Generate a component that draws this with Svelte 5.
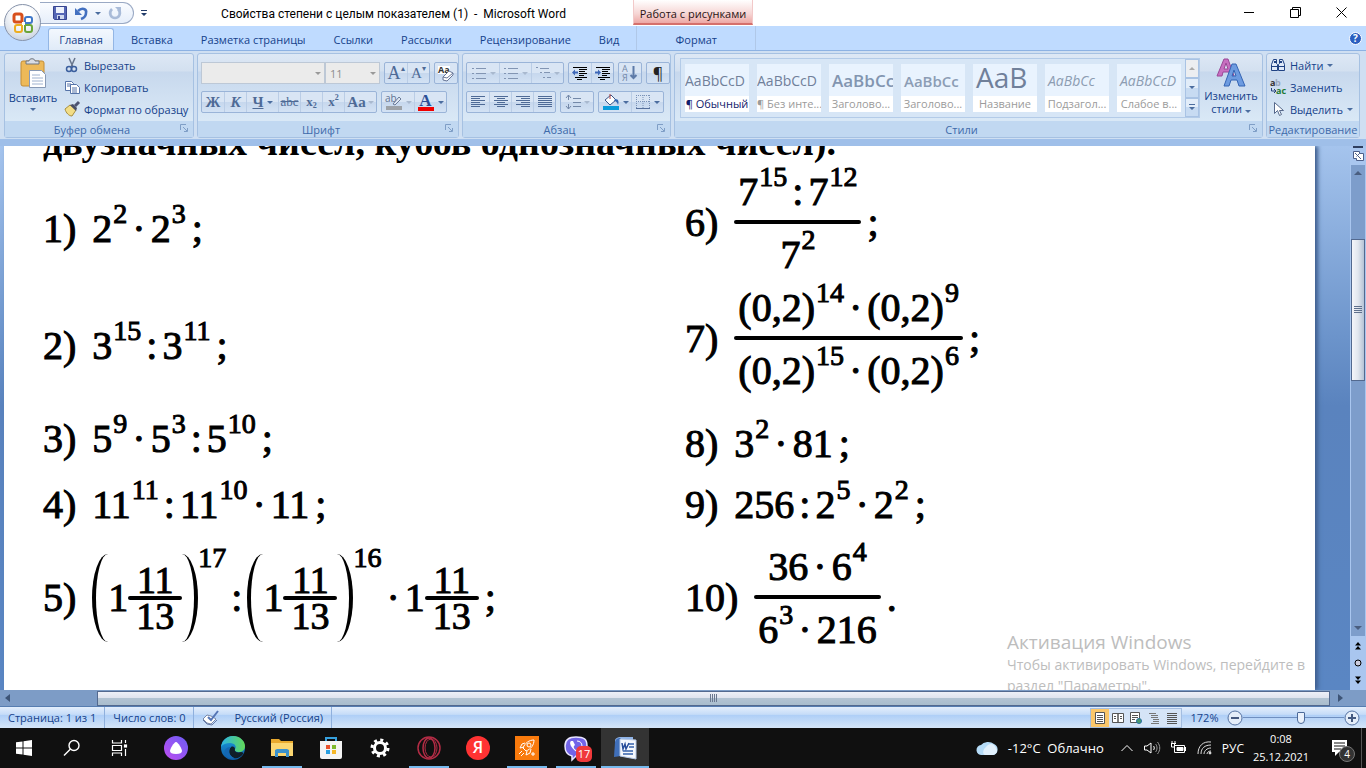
<script>
	let fontSize = '11';
	let zoom = 172;

	const tabs = ['Вставка', 'Разметка страницы', 'Ссылки', 'Рассылки', 'Рецензирование', 'Вид'];

	const styles = [
		{ name: '¶ Обычный', sample: 'AaBbCcD', kind: 'normal active' },
		{ name: '¶ Без инте...', sample: 'AaBbCcD', kind: 'normal' },
		{ name: 'Заголово...', sample: 'AaBbCс', kind: 'heading1' },
		{ name: 'Заголово...', sample: 'AaBbCc', kind: 'heading2' },
		{ name: 'Название', sample: 'АаВ', kind: 'title' },
		{ name: 'Подзагол...', sample: 'AaBbCc', kind: 'subtitle' },
		{ name: 'Слабое в...', sample: 'AaBbCcD', kind: 'subtle' }
	];

	const mixed = [{ v: '1' }, { small: true, top: [{ v: '11' }], bottom: [{ v: '13' }] }];

	const left = [
		{ n: '1)', parts: [{ v: '2', s: '2' }, { op: '·' }, { v: '2', s: '3' }], end: ';' },
		{ n: '2)', parts: [{ v: '3', s: '15' }, { op: ':' }, { v: '3', s: '11' }], end: ';' },
		{
			n: '3)',
			parts: [{ v: '5', s: '9' }, { op: '·' }, { v: '5', s: '3' }, { op: ':' }, { v: '5', s: '10' }],
			end: ';'
		},
		{
			n: '4)',
			parts: [{ v: '11', s: '11' }, { op: ':' }, { v: '11', s: '10' }, { op: '·' }, { v: '11' }],
			end: ';'
		},
		{
			n: '5)',
			parts: [{ paren: mixed, s: '17' }, { op: ':' }, { paren: mixed, s: '16' }, { op: '·' }, ...mixed],
			end: ';'
		}
	];

	const right = [
		{
			n: '6)',
			parts: [
				{ top: [{ v: '7', s: '15' }, { op: ':' }, { v: '7', s: '12' }], bottom: [{ v: '7', s: '2' }] }
			],
			end: ';'
		},
		{
			n: '7)',
			parts: [
				{
					top: [{ v: '(0,2)', s: '14' }, { op: '·' }, { v: '(0,2)', s: '9' }],
					bottom: [{ v: '(0,2)', s: '15' }, { op: '·' }, { v: '(0,2)', s: '6' }]
				}
			],
			end: ';'
		},
		{ n: '8)', parts: [{ v: '3', s: '2' }, { op: '·' }, { v: '81' }], end: ';' },
		{
			n: '9)',
			parts: [{ v: '256' }, { op: ':' }, { v: '2', s: '5' }, { op: '·' }, { v: '2', s: '2' }],
			end: ';'
		},
		{
			n: '10)',
			parts: [
				{
					top: [{ v: '36' }, { op: '·' }, { v: '6', s: '4' }],
					bottom: [{ v: '6', s: '3' }, { op: '·' }, { v: '216' }]
				}
			],
			end: '.'
		}
	];
</script>

{#snippet terms(parts)}
	{#each parts as p}
		{#if p.op}
			<span class="op">{p.op}</span>
		{:else if p.top}
			<span class="frac" class:small={p.small}>
				<span class="line">{@render terms(p.top)}</span>
				<span class="bar"></span>
				<span class="line den">{@render terms(p.bottom)}</span>
			</span>
		{:else if p.paren}
			<span class="paren open"></span>
			{@render terms(p.paren)}
			<span class="paren close"></span>
			<span class="power">{p.s}</span>
		{:else}
			<span class="term">{p.v}{#if p.s}<sup>{p.s}</sup>{/if}</span>
		{/if}
	{/each}
{/snippet}

{#snippet problems(list, side)}
	<ul class="problems {side}">
		{#each list as item}
			<li>
				<span class="num">{item.n}</span>
				{@render terms(item.parts)}
				<span class="end">{item.end}</span>
			</li>
		{/each}
	</ul>
{/snippet}

{#snippet lines(widths)}
	<svg width="16" height="14" viewBox="0 0 16 14" shape-rendering="crispEdges">
		{#each widths as w, i}
			<rect x={w[0]} y={1 + i * 2} width={w[1]} height="1" fill="currentColor" />
		{/each}
	</svg>
{/snippet}

{#snippet launcher()}
	<button class="launcher" aria-label="Параметры">
		<svg width="8" height="8" viewBox="0 0 8 8" fill="none" stroke="#7f9ec6">
			<path d="M.5 6V.5H6M3 3l4 4M7.5 4v3.5H4" />
		</svg>
	</button>
{/snippet}

<div class="window">
	<header class="titlebar">
		<div class="quick">
			<button aria-label="Сохранить">
				<svg width="14" height="14" viewBox="0 0 14 14">
					<path d="M.5.5h13v13h-12l-1-1z" fill="#5566b5" stroke="#38458f" />
					<rect x="3" y="1" width="8" height="6" fill="#eef2fb" />
					<rect x="4" y="9" width="7" height="4" fill="#cfd8ee" />
					<rect x="5" y="10" width="2" height="3" fill="#38458f" />
				</svg>
			</button>
			<button aria-label="Отменить">
				<svg width="14" height="14" viewBox="0 0 14 14" fill="none">
					<path d="M4 5c4-4 9-2 8 2 0 3-2 5-5 6" stroke="#4370c0" stroke-width="2.6" />
					<path d="M1 2v7h7z" fill="#4370c0" />
				</svg>
			</button>
			<span class="arrow"></span>
			<button aria-label="Повторить">
				<svg width="14" height="14" viewBox="0 0 14 14" fill="none">
					<path d="M4 3c-4 4-1 9 3 9s7-5 3-9" stroke="#a9bbd8" stroke-width="2.6" />
					<path d="M7 1h6v6z" fill="#a9bbd8" />
				</svg>
			</button>
		</div>
		<button class="customize" aria-label="Настройка панели">
			<svg width="6" height="7" viewBox="0 0 6 7" fill="#223c6a"><path d="M0 0h6v1H0zM0 3h6L3 6z" /></svg>
		</button>
		<h1>Свойства степени с целым показателем (1) &nbsp;- &nbsp;Microsoft Word</h1>
		<div class="context">Работа с рисунками</div>
		<div class="controls">
			<button aria-label="Свернуть"><svg width="11" height="11"><path d="M0 5.5h10" stroke="#000" /></svg></button>
			<button aria-label="Свернуть в окно">
				<svg width="11" height="11" fill="none" stroke="#000"><path d="M.5 2.5h8v8h-8zM2.5 2.5v-2h8v8h-2" /></svg>
			</button>
			<button aria-label="Закрыть"><svg width="11" height="11"><path d="M.5.5l10 10M10.5.5l-10 10" stroke="#000" /></svg></button>
		</div>
	</header>

	<button class="office" aria-label="Кнопка Office">
		<svg width="24" height="24" viewBox="0 0 24 24" fill="none">
			<path d="M11 11H5a2 2 0 0 1-2-2V5a2 2 0 0 1 2-2h4a2 2 0 0 1 2 2v6" stroke="#d8501c" stroke-width="3" />
			<path d="M14 11V8a2 2 0 0 1 2-2h3a2 2 0 0 1 2 2v2a2 2 0 0 1-2 2h-5" stroke="#3f78c9" stroke-width="2" />
			<path d="M11 14v5a2 2 0 0 1-2 2H6a2 2 0 0 1-2-2v-3a2 2 0 0 1 2-2h5" stroke="#edae20" stroke-width="2" />
			<path d="M14 14h5a2 2 0 0 1 2 2v3a2 2 0 0 1-2 2h-3a2 2 0 0 1-2-2v-5" stroke="#6ba53a" stroke-width="2" />
		</svg>
	</button>

	<nav class="tabs">
		<button class="tab current">Главная</button>
		{#each tabs as tab}
			<button class="tab">{tab}</button>
		{/each}
		<button class="tab format">Формат</button>
		<button class="help" aria-label="Справка">?</button>
	</nav>

	<section class="ribbon">
		<div class="group clipboard">
			<div class="body">
				<button class="big">
					<svg width="28" height="32" viewBox="0 0 28 32">
						<rect x="2" y="3" width="23" height="25" rx="2" fill="#edb958" stroke="#c48d35" />
						<path d="M7 6V3h3c0-3 6-3 6 0h4v3z" fill="#d9dde4" stroke="#70767f" />
						<path d="M10.500 12.500h12l4 4v13h-16z" fill="#fff" stroke="#8799b5" />
						<path d="M13 17h8M13 20h11M13 23h11M13 26h11" stroke="#9fb2cf" />
					</svg>
					<span>Вставить</span>
					<span class="arrow"></span>
				</button>
				<div class="stack">
					<button>
						<svg width="16" height="16" viewBox="0 0 16 16" fill="none" stroke="#3b5f9e">
							<path d="M5 1l4 9M11 1L7 10" stroke="#67758c" stroke-width="1.500" />
							<circle cx="5" cy="12" r="2.500" stroke-width="1.500" />
							<circle cx="10" cy="12" r="2.500" stroke-width="1.500" />
						</svg>
						Вырезать
					</button>
					<button>
						<svg width="16" height="16" viewBox="0 0 16 16" fill="#fff" stroke="#5573a8">
							<path d="M1.500 2.500h6l2 2v7h-8z" />
							<path d="M3 5h4M3 7h4" />
							<path d="M6.500 5.500h6l3 3v6h-9z" />
							<path d="M8 9h5M8 11h5M8 13h5" />
						</svg>
						Копировать
					</button>
					<button>
						<svg width="16" height="16" viewBox="0 0 16 16">
							<path d="M1 8l5-4 6 5-4 6c-3 0-6-3-7-7z" fill="#f2dd86" stroke="#a98f3c" />
							<path d="M6 4l3-1 4 4-1 3z" fill="#4a4f66" />
							<path d="M11 5l4-4" stroke="#4d5472" stroke-width="3" />
						</svg>
						Формат по образцу
					</button>
				</div>
			</div>
			<footer>Буфер обмена{@render launcher()}</footer>
		</div>

		<div class="group font">
			<div class="body rows">
				<div class="row">
					<div class="combos">
						<label class="combo name">
							<select aria-label="Шрифт" disabled><option></option></select>
							<span class="arrow"></span>
						</label>
						<label class="combo size">
							<select aria-label="Размер шрифта" bind:value={fontSize} disabled><option>11</option></select>
							<span class="arrow"></span>
						</label>
					</div>
					<div class="set">
						<button class="serif big-a" aria-label="Увеличить размер">A<sup>▴</sup></button>
						<button class="serif" aria-label="Уменьшить размер">A<sup>▾</sup></button>
					</div>
					<div class="set">
						<button aria-label="Очистить формат">
							<svg width="18" height="17" viewBox="0 0 18 17">
								<rect x="1" y="1" width="12" height="8" fill="#fff" />
								<text x="1" y="8" font-size="9" font-weight="bold" fill="#333">Aa</text>
								<path d="M6 12l6-6 4 2v2l-6 6-4-1z" fill="#fff" stroke="#667597" />
								<path d="M6 12l4 1 6-5" fill="none" stroke="#667597" />
							</svg>
						</button>
					</div>
				</div>
				<div class="row">
					<div class="set">
						<button class="serif bold">Ж</button>
						<button class="serif bold italic">К</button>
						<button class="serif bold wide"><u>Ч</u><span class="arrow"></span></button>
						<button class="serif small"><s>abc</s></button>
						<button class="serif bold small">x<sub>2</sub></button>
						<button class="serif bold small">x<sup>2</sup></button>
						<button class="serif bold case">Aa<span class="arrow dim"></span></button>
					</div>
					<div class="set">
						<button class="wide" aria-label="Цвет выделения">
							<svg width="18" height="18" viewBox="0 0 18 18">
								<text x="0" y="9" font-size="10" fill="#5f7292">ab</text>
								<path d="M8 11l6-7 2 2-6 6z" fill="#dfe7f2" stroke="#6b7c99" />
								<rect x="1" y="13" width="16" height="4" fill="#9da2a8" />
							</svg>
							<span class="arrow dim"></span>
						</button>
						<button class="color" aria-label="Цвет текста">
							<span class="swatch">A</span>
							<span class="arrow"></span>
						</button>
					</div>
				</div>
			</div>
			<footer>Шрифт{@render launcher()}</footer>
		</div>

		<div class="group paragraph">
			<div class="body rows">
				<div class="row">
					<div class="set dim">
						{#each ['bullets', 'numbers', 'levels'] as kind}
							<button class="list" aria-label={kind}>
								<svg width="16" height="14" viewBox="0 0 16 14" stroke="currentColor" shape-rendering="crispEdges">
									{#if kind === 'levels'}
										<path d="M1 1.500h2M5 2.500h9M5 6.500h2M9 6.500h6M8 11.500h2M12 11.500h4" />
									{:else}
										<path d="M1 2.500h2M1 7.500h2M1 12.500h2M5 2.500h10M5 7.500h10M5 12.500h10" />
									{/if}
								</svg>
								<span class="arrow dim"></span>
							</button>
						{/each}
					</div>
					<div class="set">
						<button aria-label="Уменьшить отступ">
							<svg width="16" height="14" viewBox="0 0 16 14">
								<path d="M1 1.500h14M7 3.500h8M7 5.500h6M7 7.500h8M7 9.500h5M3 11.500h12M5 13.500h5" stroke="#000" />
								<path d="M0 6.500l3-3v2h3v2H3v2z" fill="#3d67b8" />
							</svg>
						</button>
						<button aria-label="Увеличить отступ">
							<svg width="16" height="14" viewBox="0 0 16 14">
								<path d="M1 1.500h14M7 3.500h8M7 5.500h6M7 7.500h8M7 9.500h5M3 11.500h12M5 13.500h5" stroke="#000" />
								<path d="M6 6.500l-3-3v2H0v2h3v2z" fill="#3d67b8" />
							</svg>
						</button>
					</div>
					<div class="set">
						<button class="dim" aria-label="Сортировка">
							<svg width="16" height="18" viewBox="0 0 16 18">
								<text x="0" y="8" font-size="9" fill="#7388a8">А</text>
								<text x="0" y="17" font-size="9" fill="#7388a8">Я</text>
								<path d="M11.500 2v12M8.500 11l3 3 3-3" fill="none" stroke="#5d7aa8" stroke-width="2" />
							</svg>
						</button>
					</div>
					<div class="set"><button class="pilcrow">¶</button></div>
				</div>
				<div class="row">
					<div class="set">
						<button aria-label="По левому краю">{@render lines([[1, 14], [1, 9], [1, 14], [1, 9], [1, 14], [1, 9]])}</button>
						<button aria-label="По центру">{@render lines([[1, 14], [4, 8], [1, 14], [4, 8], [1, 14], [4, 8]])}</button>
						<button aria-label="По правому краю">{@render lines([[1, 14], [6, 9], [1, 14], [6, 9], [1, 14], [6, 9]])}</button>
						<button aria-label="По ширине">{@render lines([[1, 14], [1, 14], [1, 14], [1, 14], [1, 14], [1, 14]])}</button>
					</div>
					<div class="set">
						<button class="list dim" aria-label="Интервал">
							<svg width="16" height="16" viewBox="0 0 16 16" fill="none" stroke="#7388a8">
								<path d="M3.500 1v5M1 4l2.500-3L6 4M3.500 10v5M1 12l2.500 3L6 12M8 4.500h8M8 8.500h8M8 12.500h8" />
							</svg>
							<span class="arrow dim"></span>
						</button>
					</div>
					<div class="set">
						<button class="wide" aria-label="Заливка">
							<svg width="18" height="18" viewBox="0 0 18 18">
								<path d="M3 7l6-5 5 5-6 5z" fill="#fff" stroke="#3a5587" />
								<path d="M8 1v5" stroke="#b04040" />
								<path d="M13 6c4 0 4 3 3 6-1-3-2-4-4-4z" fill="#2f66b3" />
								<rect x="1" y="13" width="16" height="4" fill="#0a9cdc" />
							</svg>
							<span class="arrow"></span>
						</button>
						<button class="wide" aria-label="Границы">
							<svg width="16" height="16" viewBox="0 0 16 16" fill="none" stroke="#7b93b8" stroke-dasharray="1 1">
								<path d="M1.500 1v13M14.500 1v13M8 1v13M1 1.500h14M1 7.500h14" />
								<path d="M1 14.500h14" stroke="#56709c" stroke-dasharray="none" />
							</svg>
							<span class="arrow"></span>
						</button>
					</div>
				</div>
			</div>
			<footer>Абзац{@render launcher()}</footer>
		</div>

		<div class="group styles">
			<div class="body">
				<div class="gallery">
					<div class="cards">
						{#each styles as style}
							<button class="card {style.kind}">
								<span class="sample">{style.sample}</span>
								<span class="caption">{style.name}</span>
							</button>
						{/each}
					</div>
					<div class="scroller">
						<button class="off" aria-label="Вверх"><span class="arrow up"></span></button>
						<button aria-label="Вниз"><span class="arrow"></span></button>
						<button aria-label="Ещё">
							<svg width="6" height="7" viewBox="0 0 6 7" fill="#4b6d9f"><path d="M0 0h6v1H0zM0 3h6L3 6z" /></svg>
						</button>
					</div>
				</div>
				<button class="big change">
					<svg width="30" height="30" viewBox="0 0 30 30">
						<path d="M1 18L8 1h4l6 17h-4l-1-4H7l-1 4zM8 11h4l-2-6z" fill="#c76fc0" stroke="#9a4796" />
						<path d="M8 28L16 6h4l9 22h-6l-2-6h-6l-2 6zM16 18h4l-2-6z" fill="#6d9be0" stroke="#3565b4" />
					</svg>
					<span>Изменить стили <span class="arrow"></span></span>
				</button>
			</div>
			<footer>Стили{@render launcher()}</footer>
		</div>

		<div class="group editing">
			<div class="body">
				<div class="stack">
					<button>
						<svg width="16" height="14" viewBox="0 0 16 14" stroke="#1f4183" fill="#dfe9f8">
							<path d="M3.500 1.500h3v4l1 1v6h-6v-6zM9.500 1.500h3l2 5v6h-6v-6l1-1zM1 8.500h14" />
							<path d="M4 4h2M10 4h2" stroke-width="2" />
						</svg>
						Найти <span class="arrow"></span>
					</button>
					<button>
						<svg width="16" height="16" viewBox="0 0 16 16" font-size="9" font-weight="bold">
							<text x="0" y="7" fill="#333">a</text>
							<text x="5" y="7" fill="#9aa8bf">b</text>
							<text x="6" y="15" fill="#1e7a34">ac</text>
							<path d="M1.500 9v3h4M4 10l2 2-2 2" fill="none" stroke="#27427c" />
						</svg>
						Заменить
					</button>
					<button>
						<svg width="16" height="16" viewBox="0 0 16 16">
							<path d="M4.500 1.500v11l3-3 2 5 2-1-2-4h4z" fill="#fff" stroke="#56698c" />
						</svg>
						Выделить <span class="arrow"></span>
					</button>
				</div>
			</div>
			<footer>Редактирование</footer>
		</div>
	</section>

	<main>
		<article class="paper">
			<div class="cut"><p>двузначных чисел, кубов однозначных чисел).</p></div>
			<div class="columns">
				{@render problems(left, 'first')}
				{@render problems(right, 'second')}
			</div>
		</article>
		<aside class="watermark">
			<h2>Активация Windows</h2>
			<p>Чтобы активировать Windows, перейдите в раздел "Параметры".</p>
		</aside>
		<div class="vscroll">
			<span class="split"></span>
			<button aria-label="Линейка">
				<svg width="13" height="12" viewBox="0 0 13 12" fill="#fff" stroke="#4c5f8a">
					<path d="M1.500 1.500h6v2h4v7h-7v-2h-3zM3 3l6 6M7.500 3.500l-3 3" />
				</svg>
			</button>
			<div class="track">
				<span class="arrow up"></span>
				<div class="thumb"><i></i></div>
				<span class="arrow down"></span>
			</div>
			<div class="browse">
				<svg width="8" height="8" viewBox="0 0 8 8"><path d="M1 3.500L4 0l3 3.500zM1 7.500L4 4l3 3.500z" /></svg>
				<svg width="8" height="8" viewBox="0 0 8 8"><circle cx="4" cy="4" r="3" fill="#ccd" stroke="#000" /></svg>
				<svg width="8" height="8" viewBox="0 0 8 8"><path d="M1 .5h6L4 4zM1 4.500h6L4 8z" /></svg>
			</div>
		</div>
	</main>

	<div class="hscroll">
		<span class="arrow prev"></span>
		<div class="thumb"><i></i></div>
		<span class="arrow next"></span>
	</div>

	<div class="status">
		<button>Страница: 1 из 1</button>
		<button>Число слов: 0</button>
		<button class="lang">
			<svg width="18" height="16" viewBox="0 0 18 16">
				<path d="M1 9l4-4 4 1 5 3-5 5-4-1z" fill="#fff" stroke="#7a89a8" />
				<path d="M1 10l4 4 5 1 5-5" fill="none" stroke="#6478a5" />
				<path d="M6 7l3 3 7-9" fill="none" stroke="#5575b5" stroke-width="2" />
			</svg>
			Русский (Россия)
		</button>
		<div class="views">
			<button class="picked" aria-label="Разметка">
				<svg width="12" height="12" fill="#fff" stroke="#555"><path d="M1.500.5h9v11h-9zM3 3.500h6M3 5.500h6M3 7.500h6M3 9.500h6" /></svg>
			</button>
			<button aria-label="Чтение">
				<svg width="12" height="12" fill="#fff" stroke="#555"><path d="M.5 1.500H6v9H.5zM6 1.500h5.500v9H6zM2 4.500h2M2 6.500h2M8 4.500h2M8 6.500h2" /></svg>
			</button>
			<button aria-label="Веб-документ">
				<svg width="12" height="12" fill="#fff" stroke="#555"><path d="M.5.5h9v10h-9zM2 3.500h6M2 5.500h6M2 7.500h3" /><circle cx="9" cy="9" r="2.500" fill="#4a9a6a" stroke="#2a6fa5" /></svg>
			</button>
			<button aria-label="Структура">
				<svg width="12" height="12" stroke="#777"><path d="M1 1.500h7M3 3.500h7M3 5.500h7M5 7.500h6M5 9.500h6M3 11.500h8" /></svg>
			</button>
			<button aria-label="Черновик">
				<svg width="12" height="12" stroke="#555"><path d="M1 1.500h10M1 3.500h10M1 5.500h10M1 7.500h10M1 9.500h10M1 11.500h10" /></svg>
			</button>
		</div>
		<span class="percent">{zoom}%</span>
		<button class="round" aria-label="Уменьшить">
			<svg width="16" height="16" viewBox="0 0 16 16"><circle cx="8" cy="8" r="7" fill="#e4edf9" stroke="#5673a3" /><path d="M4 8h8" stroke="#45597f" stroke-width="2" /></svg>
		</button>
		<input type="range" aria-label="Масштаб" min="10" max="290" bind:value={zoom} />
		<button class="round" aria-label="Увеличить">
			<svg width="16" height="16" viewBox="0 0 16 16"><circle cx="8" cy="8" r="7" fill="#e4edf9" stroke="#5673a3" /><path d="M4 8h8M8 4v8" stroke="#45597f" stroke-width="2" /></svg>
		</button>
	</div>

	<footer class="taskbar">
		<button aria-label="Пуск">
			<svg width="16" height="16" viewBox="0 0 16 16" fill="#fff"><path d="M0 2.300L6.500 1.400v6.100H0zM7.500 1.300L16 0v7.500H7.500zM0 8.500h6.500v6.100L0 13.700zM7.500 8.500H16V16l-8.500-1.300z" /></svg>
		</button>
		<button aria-label="Поиск">
			<svg width="18" height="18" viewBox="0 0 18 18" fill="none" stroke="#fff" stroke-width="1.400"><circle cx="11" cy="6.500" r="5" /><path d="M7.500 10L1 16.500" /></svg>
		</button>
		<button aria-label="Представление задач">
			<svg width="18" height="16" viewBox="0 0 18 16" fill="none" stroke="#fff" stroke-width="1.200"><path d="M1.500 0v3h9V0M1.500 16v-3h9v3M1.500 5.500h9v5h-9zM14.500 0v3M14.500 9v7" /><rect x="13.500" y="5" width="2" height="2" fill="#fff" /></svg>
		</button>
		<button class="alice" aria-label="Алиса">
			<svg width="24" height="24" viewBox="0 0 24 24">
				<defs><linearGradient id="al" x1="0" y1="1" x2="1" y2="0"><stop offset="0" stop-color="#c04df0" /><stop offset="1" stop-color="#6a5df5" /></linearGradient></defs>
				<circle cx="12" cy="12" r="12" fill="url(#al)" />
				<path d="M12 6c2 0 6 7 6 9s-2 3-6 3-6-1-6-3 4-9 6-9z" fill="#fff" />
			</svg>
		</button>
		<button aria-label="Edge">
			<svg width="24" height="24" viewBox="0 0 24 24">
				<defs>
					<linearGradient id="e1" x1="0" y1="0" x2="1" y2="0"><stop offset="0" stop-color="#2bb3e6" /><stop offset="1" stop-color="#62d957" /></linearGradient>
					<linearGradient id="e2" x1="0" y1="0" x2="0" y2="1"><stop offset="0" stop-color="#1d9fe0" /><stop offset="1" stop-color="#0c59a4" /></linearGradient>
				</defs>
				<circle cx="12" cy="12" r="12" fill="url(#e2)" />
				<path d="M0 11C1 4 6 0 12 0c7 0 12 5 12 10 0 4-3 6-6 6-3 0-5-1-4-3 2-2 0-6-5-6-4 0-7 1-9 4z" fill="url(#e1)" />
				<path d="M14 13c-1 3 3 4 6 3 2 0 3 1 2 2-2 3-6 5-9 4-5-2-6-8-3-11 2-1 4 0 4 2z" fill="#111" opacity=".85" />
				<path d="M10 11c-4 3-2 9 3 11-6 2-11-4-9-8 1-2 3-3 6-3z" fill="#1467b3" />
			</svg>
		</button>
		<button class="running" aria-label="Проводник">
			<svg width="22" height="18" viewBox="0 0 22 18"><path d="M0 0h8l2 2h12v15H0z" fill="#e8a92e" /><path d="M0 4h22v13H0z" fill="#fbd671" /><path d="M4 18v-7l2-1h10l2 1v7h-3v-4H7v4z" fill="#3c92cc" /></svg>
		</button>
		<button aria-label="Магазин">
			<svg width="24" height="24" viewBox="0 0 24 24"><path d="M7 5V2h10v3" fill="none" stroke="#36a0dd" stroke-width="2" /><path d="M1 5h22v16a2 2 0 0 1-2 2H3a2 2 0 0 1-2-2z" fill="#f4f4f4" /><path d="M7 9h4v4H7z" fill="#e9522c" /><path d="M13 9h4v4h-4z" fill="#7db92c" /><path d="M7 14h4v4H7z" fill="#2a9fe0" /><path d="M13 14h4v4h-4z" fill="#f5b727" /></svg>
		</button>
		<button aria-label="Параметры">
			<svg width="20" height="20" viewBox="0 0 20 20" fill="none" stroke="#fff"><circle cx="10" cy="10" r="5.500" stroke-width="3" /><circle cx="10" cy="10" r="8" stroke-width="3" stroke-dasharray="3 3.280" /></svg>
		</button>
		<button class="running" aria-label="Opera">
			<svg width="24" height="24" viewBox="0 0 24 24" fill="none" stroke="#b32c45"><circle cx="12" cy="12" r="11" stroke-width="1.500" /><ellipse cx="12" cy="12" rx="6" ry="10" stroke-width="1.500" /><ellipse cx="14" cy="12" rx="6" ry="9" /></svg>
		</button>
		<button aria-label="Яндекс"><span class="yandex">Я</span></button>
		<button class="running" aria-label="Ракета">
			<svg width="24" height="24" viewBox="0 0 24 24"><rect width="24" height="24" fill="#f97a0c" /><g fill="none" stroke="#fff"><path d="M8 12c2-5 6-8 11-8 0 5-3 9-8 11zM9 11l-4 1 2-4 3-1M12 15l-1 4 4-2 1-4M7 15l-3 3M9 17l-3 3" /><circle cx="14" cy="9" r="2" /><path d="M18 16v4M16 18h4" /></g></svg>
		</button>
		<button class="running" aria-label="Viber">
			<svg width="24" height="24" viewBox="0 0 24 24"><path d="M12 1c8 0 11 2 11 9s-3 10-11 10l-4 4v-4c-5-1-7-4-7-10s3-9 11-9z" fill="#7264e8" stroke="#e9e6ff" stroke-width="1.500" /><path d="M7 5c-3 2 2 10 8 12l2-2-3-2-2 1c-1 0-3-3-2-4l1-1-2-4z" fill="#fff" /><path d="M13 5c3 0 5 2 5 5" fill="none" stroke="#fff" /></svg>
			<span class="badge">17</span>
		</button>
		<button class="running now" aria-label="Word">
			<svg width="24" height="24" viewBox="0 0 24 24"><path d="M2 5c0-3 3-4 6-4h12v18H2z" fill="#8fb3e6" /><path d="M2 6c1-4 4-4 6-4v18l-7 1z" fill="#406fb9" /><path d="M7 3l16 1v19L7 20z" fill="#f5f8fd" stroke="#b5c8e6" /><path d="M9 7l1 6 2-5 1 5 3-6" fill="none" stroke="#264c9a" stroke-width="1.500" /><path d="M16 8h5M16 11h5M10 15h10M10 18h10" stroke="#3560ab" stroke-width="1.500" /></svg>
		</button>
		<div class="tray">
			<button class="weather">
				<svg width="24" height="18" viewBox="0 0 24 18"><path d="M6 16a5 5 0 0 1-1-10 8 6 0 0 1 13-1 6 6 0 0 1 0 11z" fill="#b5dcf8" /><path d="M10 8c3-4 8-4 10 1 3 4-1 7-4 7H9c-3-1-2-6 1-8z" fill="#e2f1fd" /></svg>
				-12°C&nbsp; Облачно
			</button>
			<button aria-label="Значки"><svg width="14" height="8" fill="none" stroke="#fff"><path d="M1.500 7L7 1.500 12.500 7" /></svg></button>
			<button aria-label="Громкость">
				<svg width="18" height="14" fill="none" stroke="#fff"><path d="M1.500 5H4l4-3v10L4 9H1.500zM10.500 5c1 1 1 3 0 4" /><path d="M12.500 3c2 2 2 6 0 8M14.500 1c3 4 3 8 0 12" stroke="#999" /></svg>
			</button>
			<button aria-label="Батарея">
				<svg width="18" height="14" fill="none" stroke="#fff"><path d="M4.500 4.500h10v7h-10zM15.500 6v4M1 2.500h5M1.500 3v3h3V3M2 0v3M5 0v3" /><path d="M7 6.500h6v3H7z" fill="#fff" /></svg>
			</button>
			<button aria-label="Сеть">
				<svg width="16" height="16" fill="none" stroke="#ddd"><path d="M1 14C1 6 6 1 14 2M4 14c0-6 4-9 10-9M7 14c0-3 3-6 7-6M10 14c0-2 2-3 4-3" /><circle cx="13" cy="13" r="1" fill="#fff" /></svg>
			</button>
			<button>РУС</button>
			<button class="clock"><span>0:08</span><span>25.12.2021</span></button>
			<button class="notes" aria-label="Уведомления">
				<svg width="18" height="18" fill="#fff"><path d="M1 1h15v12H8l-4 4v-4H1z" /><path d="M3 4h11M3 7h11M3 10h7" stroke="#111" /></svg>
				<span class="count">4</span>
			</button>
		</div>
	</footer>
</div>

<style>
	:global(body) {
		margin: 0;
	}
	.window {
		position: relative;
		display: flex;
		flex-direction: column;
		height: 100vh;
		overflow: hidden;
		background: #bfdbff;
		color: #15428b;
		font-family: 'Open Sans', 'Noto Sans', sans-serif;
		font-size: 11px;
	}
	button {
		display: flex;
		align-items: center;
		justify-content: center;
		margin: 0;
		padding: 0;
		border: 0;
		background: none;
		color: inherit;
		font: inherit;
		white-space: nowrap;
	}
	svg {
		flex: none;
		overflow: visible;
	}
	.arrow {
		display: inline-block;
		flex: none;
		border: 3px solid transparent;
		border-top-color: #4b6d9f;
		border-bottom: 0;
	}
	.arrow.up {
		border: 4px solid transparent;
		border-bottom-color: #4a5e80;
		border-top: 0;
	}
	.arrow.down {
		border-width: 4px;
		border-bottom: 0;
		border-top-color: #4a5e80;
	}
	.arrow.dim {
		border-top-color: #a9b9cf;
	}

	/* title */
	.titlebar {
		display: flex;
		height: 26px;
		background: #fff;
	}
	.quick {
		display: flex;
		align-items: center;
		gap: 7px;
		box-sizing: border-box;
		width: 94px;
		height: 22px;
		margin: 2px 0 0 40px;
		padding-left: 13px;
		border: 1px solid #9aa9c4;
		border-left: 0;
		border-radius: 0 12px 12px 0;
		background: linear-gradient(#fafcff, #e6eefa);
	}
	.customize {
		width: 20px;
	}
	h1 {
		flex: 1;
		margin: 0;
		color: #000;
		font-family: Roboto, sans-serif;
		font-size: 12px;
		font-weight: 400;
		line-height: 28px;
		text-align: center;
	}
	.context {
		width: 118px;
		height: 23px;
		border: 1px solid #f2c9c9;
		border-top: 0;
		border-bottom: 2px solid #d5706c;
		background: linear-gradient(#fff, #f6d5d4 60%, #eda8a5);
		color: #2a1414;
		line-height: 28px;
		text-align: center;
	}
	.controls {
		display: flex;
		justify-content: flex-end;
		box-sizing: border-box;
		width: 613px;
		padding-right: 2px;
	}
	.controls button {
		width: 46px;
		height: 24px;
	}
	.office {
		position: absolute;
		top: 4px;
		left: 4px;
		z-index: 2;
		width: 37px;
		height: 37px;
		border: 1px solid #8793aa;
		border-radius: 50%;
		background: radial-gradient(circle at 50% 30%, #fff 30%, #dde3ec 65%, #b9c3d3);
	}

	/* tabs */
	.tabs {
		display: flex;
		height: 24px;
		padding-left: 48px;
		padding-right: 4px;
		background: #bfdbff;
	}
	.tab {
		padding: 2px 14px 0;
	}
	.tab.current {
		width: 66px;
		margin-top: 2px;
		margin-right: 3px;
		padding: 0;
		border: 1px solid #93b6e5;
		border-bottom: 0;
		border-radius: 3px 3px 0 0;
		background: linear-gradient(#f3f8fe, #e0ebf8);
	}
	.tab.format {
		width: 120px;
		margin-left: 3px;
		border-left: 1px solid #b0c8e8;
		border-right: 1px solid #b0c8e8;
	}
	.help {
		align-self: center;
		width: 13px;
		height: 13px;
		margin-left: auto;
		border: 1px solid #fff;
		border-radius: 50%;
		background: #2c5fc0;
		color: #fff;
		font-size: 10px;
		font-weight: 700;
	}

	/* ribbon */
	.ribbon {
		display: flex;
		gap: 3px;
		padding: 2px 6px 1px 4px;
		border-top: 1px solid #8db2e3;
		border-bottom: 7px solid #9fbfe9;
		background: #cfdff2;
	}
	.group {
		box-sizing: border-box;
		flex: none;
		border: 1px solid #a6c1e2;
		border-radius: 3px;
		background: linear-gradient(#dde8f5 0, #d3e0f0 17px, #c7d8ed 18px, #d9e8f6 66px);
	}
	.clipboard {
		width: 190px;
	}
	.font {
		width: 262px;
	}
	.paragraph {
		width: 209px;
	}
	.styles {
		flex: 1;
	}
	.editing {
		width: 94px;
	}
	.body {
		display: flex;
		height: 67px;
	}
	.group footer {
		position: relative;
		display: flex;
		align-items: center;
		justify-content: center;
		height: 16px;
		padding-right: 14px;
		background: #c1d8f1;
		color: #3e6aaa;
		white-space: nowrap;
	}
	.editing footer {
		padding-right: 0;
	}
	.launcher {
		position: absolute;
		right: 5px;
		top: 3px;
	}
	.big {
		flex-direction: column;
		justify-content: flex-start;
		gap: 1px;
		width: 56px;
		padding-top: 4px;
		line-height: 14px;
	}
	.big .arrow {
		margin-top: 2px;
	}
	.stack {
		display: flex;
		flex-direction: column;
	}
	.stack button {
		justify-content: flex-start;
		gap: 4px;
		height: 22px;
		padding-left: 3px;
	}
	.rows {
		flex-direction: column;
		gap: 7px;
		height: 59px;
		padding: 8px 4px 0 3px;
	}
	.row {
		display: flex;
		gap: 4px;
	}
	.set {
		display: flex;
		box-sizing: border-box;
		height: 22px;
		border: 1px solid #9ab4d8;
		border-radius: 2px;
		background: linear-gradient(#d9e5f4 50%, #c6d7ed 50%, #d3e2f4);
		color: #4e6a96;
	}
	.set button {
		width: 22px;
	}
	.set button + button {
		border-left: 1px solid #bacde6;
	}
	.set .wide,
	.set .list {
		width: 32px;
		gap: 3px;
	}
	.set .case {
		width: 32px;
		gap: 2px;
		font-size: 14px;
	}
	.set .serif {
		font-family: 'Liberation Serif', serif;
		font-size: 15px;
	}
	.set .serif.big-a {
		font-size: 18px;
	}
	.set .serif.small {
		font-size: 13px;
	}
	.set sup,
	.set sub {
		font-size: 8px;
		line-height: 8px;
	}
	.set sup {
		align-self: flex-start;
		padding-top: 2px;
	}
	.set sub {
		align-self: flex-end;
		padding-bottom: 2px;
	}
	.bold {
		font-weight: 700;
	}
	.italic {
		font-style: italic;
	}
	.dim {
		color: #8295b3;
	}
	.set .color {
		width: 32px;
		gap: 4px;
	}
	.swatch {
		width: 16px;
		border-bottom: 4px solid #f00000;
		color: #2c4f96;
		font-family: 'Liberation Serif', serif;
		font-size: 17px;
		font-weight: 700;
		line-height: 13px;
	}
	.pilcrow {
		color: #222;
		font-size: 16px;
	}
	.combos {
		display: flex;
	}
	.combo {
		position: relative;
	}
	.combo select {
		appearance: none;
		box-sizing: border-box;
		width: 100%;
		height: 22px;
		padding: 0 4px;
		border: 1px solid #bdc8d6;
		border-radius: 0;
		background: #ebebeb;
		color: #8d8d8d;
		font: inherit;
		opacity: 1;
	}
	.combo .arrow {
		position: absolute;
		top: 10px;
		right: 4px;
		border-top-color: #999;
	}
	.combo.name {
		width: 124px;
	}
	.combo.size {
		width: 55px;
	}
	.gallery {
		display: flex;
		flex: 1;
		justify-content: space-between;
		box-sizing: border-box;
		height: 60px;
		margin: 4px 0 0 5px;
		border: 1px solid #b3cbe8;
		background: #d7e6f6;
	}
	.cards {
		display: flex;
		gap: 8px;
		padding: 5px 4px;
	}
	.card {
		flex-direction: column;
		align-items: stretch;
		justify-content: flex-start;
		width: 64px;
		height: 48px;
		overflow: hidden;
		background: #fff;
		color: #9b9b9b;
	}
	.card.active {
		color: #11206b;
	}
	.sample {
		height: 32px;
		overflow: hidden;
		background: #e9f3fe;
		color: #70809a;
		font-size: 14px;
		line-height: 34px;
		text-align: left;
	}
	.caption {
		line-height: 15px;
	}
	.heading1 .sample,
	.heading2 .sample,
	.title .sample,
	.subtitle .sample,
	.subtle .sample {
		padding-left: 3px;
	}
	.heading1 .sample {
		color: #8295b0;
		font-size: 17px;
		font-weight: 600;
	}
	.heading2 .sample {
		color: #8c9db5;
		font-size: 15px;
		font-weight: 600;
	}
	.title .sample {
		font-size: 28px;
		line-height: 26px;
	}
	.subtitle .sample,
	.subtle .sample {
		color: #8d9db2;
		font-style: italic;
	}
	.scroller {
		display: flex;
		flex-direction: column;
		width: 14px;
	}
	.scroller button {
		flex: 1;
		border: 1px solid #a9c3e4;
		background: linear-gradient(#e2edf9 50%, #c7dbf2 50%);
	}
	.scroller .off {
		background: #eceef1;
	}
	.scroller .off .arrow {
		border-width: 3px;
		border-top: 0;
		border-bottom-color: #aaa;
	}
	.change {
		width: 62px;
		line-height: 13px;
	}
	.change span {
		white-space: normal;
	}

	/* document */
	main {
		position: relative;
		display: flex;
		flex: 1;
		min-height: 0;
		padding-left: 4px;
		overflow: hidden;
		background: linear-gradient(#a5c4ed, #6c94cb 190px, #5a83be 260px, #5a86c3);
	}
	.paper {
		flex: 1;
		margin-right: 35px;
		background: #fff;
		box-shadow: 3px 0 4px #3f5f8f;
		color: #000;
		font-family: 'Liberation Serif', serif;
		font-size: 40px;
		-webkit-text-stroke: 1px #000;
	}
	.cut {
		display: flex;
		align-items: flex-end;
		height: 21px;
		padding-left: 39px;
		overflow: hidden;
	}
	.cut p {
		margin: 0;
		font-size: 38px;
		font-weight: 700;
		line-height: 50px;
		white-space: nowrap;
		-webkit-text-stroke: 0;
	}
	.columns {
		display: grid;
		grid-template-columns: 642px 1fr;
		padding-left: 39px;
	}
	.problems {
		display: grid;
		align-items: center;
		margin: 0;
		padding: 0;
		list-style: none;
	}
	.first {
		grid-template-rows: 124px 110px 76px 56px 130px;
	}
	.second {
		grid-template-rows: 112px 120px 90px 32px 154px;
	}
	li {
		display: flex;
		align-items: center;
		height: 0;
		line-height: 56px;
	}
	.num {
		padding-right: 16px;
	}
	.op {
		padding: 0 5px;
	}
	.end {
		padding-left: 6px;
	}
	.term sup {
		padding-left: 1px;
		font-size: 28px;
		line-height: 0;
		vertical-align: 19px;
	}
	.frac {
		display: flex;
		flex-direction: column;
	}
	.line {
		display: flex;
		justify-content: center;
		padding: 0 4px;
	}
	.den {
		padding-top: 3px;
	}
	.bar {
		height: 4px;
		border-radius: 2px;
		background: #000;
	}
	.small {
		font-size: 38px;
		line-height: 32px;
	}
	.small .line {
		padding: 0 8px;
	}
	.paren {
		width: 12px;
		height: 88px;
		border: 0 solid #000;
	}
	.open {
		border-left-width: 4px;
		border-radius: 16px 0 0 16px / 44px 0 0 44px;
	}
	.close {
		border-right-width: 4px;
		border-radius: 0 16px 16px 0 / 0 44px 44px 0;
	}
	.power {
		height: 108px;
		font-size: 28px;
		line-height: 28px;
	}
	.watermark {
		position: absolute;
		bottom: -6px;
		left: 1007px;
		width: 310px;
		color: #bdbdbd;
	}
	.watermark h2 {
		margin: 0;
		font-size: 19px;
		font-weight: 400;
		line-height: 24px;
	}
	.watermark p {
		margin: 0;
		font-size: 14px;
		line-height: 21px;
	}
	.vscroll {
		display: flex;
		flex-direction: column;
		align-items: center;
		width: 16px;
		background: #a9c6ef;
	}
	.split {
		width: 10px;
		height: 2px;
		margin-bottom: 2px;
		background: #2f3f60;
	}
	.vscroll .track {
		display: flex;
		flex: 1;
		flex-direction: column;
		align-items: center;
		box-sizing: border-box;
		width: 14px;
		margin-top: 3px;
		padding: 6px 0;
		background: #7d9dcb;
	}
	.thumb {
		display: flex;
		align-items: center;
		justify-content: center;
		box-sizing: border-box;
		border: 1px solid #53698f;
	}
	.vscroll .thumb {
		width: 14px;
		height: 31%;
		margin-top: 64px;
		margin-bottom: auto;
		background: linear-gradient(90deg, #f5f6fa, #e2e6ee 50%, #b5c3d6);
	}
	.vscroll .thumb i {
		width: 8px;
		height: 8px;
		background: repeating-linear-gradient(#5f708d 0 1px, transparent 1px 2px);
	}
	.browse {
		display: flex;
		flex-direction: column;
		gap: 9px;
		padding: 6px 0;
	}
	.hscroll {
		display: flex;
		align-items: center;
		height: 16px;
		padding-right: 16px;
		background: #7d9cc6;
	}
	.hscroll .thumb {
		flex: 1;
		height: 15px;
		margin-left: 80px;
		background: linear-gradient(#eef0f8, #dfe3ee 45%, #b2c3d3 50%, #a9bdcd);
	}
	.hscroll .thumb i {
		width: 8px;
		height: 8px;
		background: repeating-linear-gradient(90deg, #6a7890 0 1px, transparent 1px 2px);
	}
	.arrow.prev,
	.arrow.next {
		margin: 0 7px 0 5px;
		border: 4px solid transparent;
		border-left: 0;
		border-right: 5px solid #3d5476;
	}
	.arrow.next {
		margin: 0 7px 0 8px;
		border-right: 0;
		border-left: 5px solid #3d5476;
	}

	/* status */
	.status {
		display: flex;
		align-items: center;
		box-sizing: border-box;
		height: 22px;
		border-top: 1px solid #567db1;
		background: linear-gradient(#e3eefc, #c6dcf8 35%, #afcff7 40%, #d5e5f8);
	}
	.status > button {
		height: 100%;
		padding: 0 8px;
		border-right: 1px solid #8fb0dd;
	}
	.status .lang {
		gap: 14px;
	}
	.views {
		display: flex;
		height: 18px;
		margin-left: auto;
		border: 1px solid #a3bde0;
		background: #d5e4f7;
	}
	.views button {
		width: 18px;
	}
	.views .picked {
		background: #fbc76a;
	}
	.percent {
		width: 45px;
		text-align: center;
	}
	.status .round {
		padding: 0;
		border: 0;
	}
	.status .round:last-child {
		margin-right: 6px;
	}
	input[type='range'] {
		appearance: none;
		width: 101px;
		height: 16px;
		margin: 0;
		background: linear-gradient(#6f8fc0, #6f8fc0) center / 100% 1px no-repeat;
	}
	input[type='range']::-webkit-slider-thumb {
		appearance: none;
		box-sizing: border-box;
		width: 8px;
		height: 12px;
		border: 1px solid #4c6a9a;
		border-radius: 1px 1px 4px 4px;
		background: #eaf1fb;
	}

	/* taskbar */
	.taskbar {
		display: flex;
		height: 40px;
		background: #101010;
		color: #fff;
	}
	.taskbar > button {
		position: relative;
		width: 48px;
		margin-right: 1px;
	}
	.taskbar > button:nth-child(-n + 3) {
		margin-right: 0;
	}
	.taskbar > .alice {
		margin: 0 9px 0 8px;
	}
	.running::after {
		content: '';
		position: absolute;
		right: 4px;
		bottom: 0;
		left: 4px;
		height: 2px;
		background: #76b9ed;
	}
	.now {
		background: #333;
	}
	.now::after {
		right: 0;
		left: 0;
	}
	.yandex {
		width: 24px;
		height: 24px;
		border-radius: 50%;
		background: #f33;
		font-size: 16px;
		font-weight: 600;
		line-height: 23px;
	}
	.badge {
		position: absolute;
		right: 8px;
		bottom: 6px;
		width: 16px;
		height: 16px;
		border-radius: 5px;
		background: #f0393b;
		line-height: 16px;
	}
	.tray {
		display: flex;
		align-items: center;
		gap: 9px;
		margin-left: auto;
		padding-right: 4px;
		font-size: 12px;
	}
	.weather {
		gap: 8px;
		margin-right: 7px;
		font-size: 13px;
	}
	.clock {
		flex-direction: column;
		width: 56px;
		font-size: 11px;
		line-height: 18px;
	}
	.notes {
		position: relative;
		width: 44px;
		height: 40px;
		border-right: 1px solid #555;
	}
	.count {
		position: absolute;
		right: 6px;
		bottom: 6px;
		width: 14px;
		height: 14px;
		border: 1px solid #777;
		border-radius: 50%;
		background: #333;
		font-size: 10px;
		line-height: 14px;
	}
</style>
